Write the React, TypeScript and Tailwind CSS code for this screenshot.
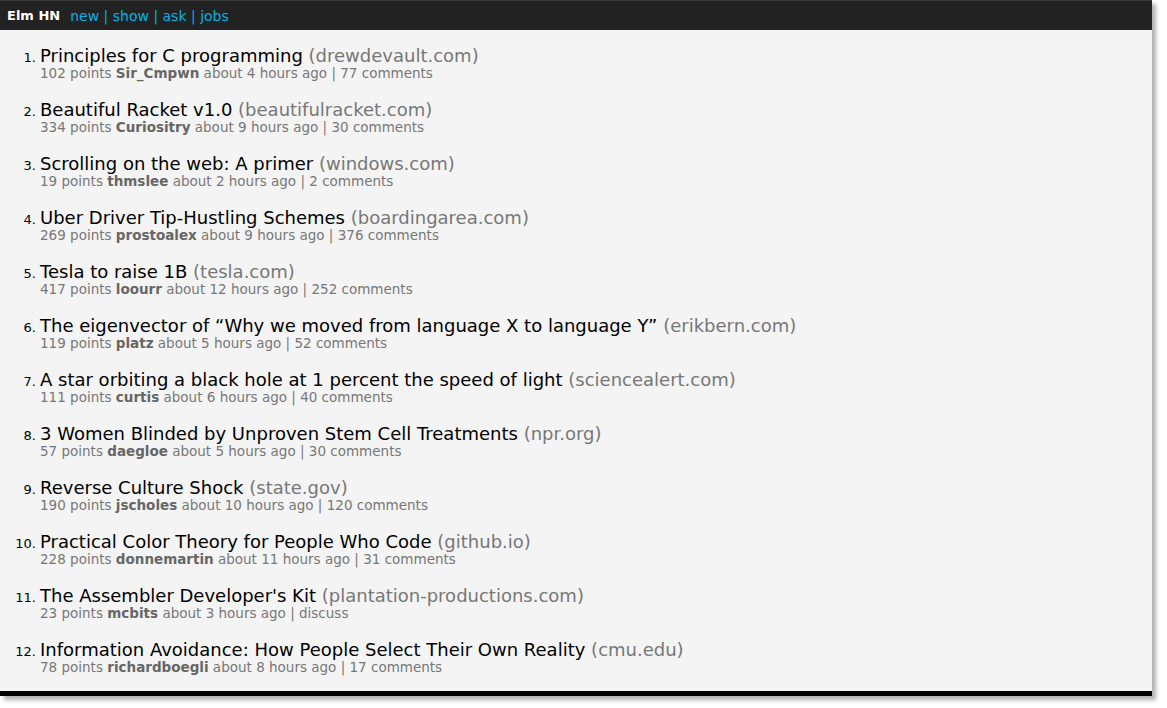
const stories = [
  { title: 'Principles for C programming', domain: 'drewdevault.com', points: 102, user: 'Sir_Cmpwn', time: '4 hours', comments: '77 comments' },
  { title: 'Beautiful Racket v1.0', domain: 'beautifulracket.com', points: 334, user: 'Curiositry', time: '9 hours', comments: '30 comments' },
  { title: 'Scrolling on the web: A primer', domain: 'windows.com', points: 19, user: 'thmslee', time: '2 hours', comments: '2 comments' },
  { title: 'Uber Driver Tip-Hustling Schemes', domain: 'boardingarea.com', points: 269, user: 'prostoalex', time: '9 hours', comments: '376 comments' },
  { title: 'Tesla to raise 1B', domain: 'tesla.com', points: 417, user: 'loourr', time: '12 hours', comments: '252 comments' },
  { title: 'The eigenvector of \u201cWhy we moved from language X to language Y\u201d', domain: 'erikbern.com', points: 119, user: 'platz', time: '5 hours', comments: '52 comments' },
  { title: 'A star orbiting a black hole at 1 percent the speed of light', domain: 'sciencealert.com', points: 111, user: 'curtis', time: '6 hours', comments: '40 comments' },
  { title: '3 Women Blinded by Unproven Stem Cell Treatments', domain: 'npr.org', points: 57, user: 'daegloe', time: '5 hours', comments: '30 comments' },
  { title: 'Reverse Culture Shock', domain: 'state.gov', points: 190, user: 'jscholes', time: '10 hours', comments: '120 comments' },
  { title: 'Practical Color Theory for People Who Code', domain: 'github.io', points: 228, user: 'donnemartin', time: '11 hours', comments: '31 comments' },
  { title: "The Assembler Developer's Kit", domain: 'plantation-productions.com', points: 23, user: 'mcbits', time: '3 hours', comments: 'discuss' },
  { title: 'Information Avoidance: How People Select Their Own Reality', domain: 'cmu.edu', points: 78, user: 'richardboegli', time: '8 hours', comments: '17 comments' },
];

export default function App() {
  return (
    <div className="w-[1167px] h-[708px] bg-white overflow-hidden" style={{ fontFamily: '"DejaVu Sans", Verdana, sans-serif' }}>
      <div className="w-[1152px] h-[696px] flex flex-col bg-[#f4f4f4] border-b-[5px] border-black shadow-[4px_4px_4px_rgba(0,0,0,0.3)]">
        <header className="h-[30px] shrink-0 bg-[#222] border-t border-[#3a3a3a] flex items-center pt-[1px] px-[7px] gap-[10px]">
          <span className="text-white font-bold text-[13px]">Elm HN</span>
          <nav className="text-[14px] text-[#00b3e6]">
            new <span>|</span> show <span>|</span> ask <span>|</span> jobs
          </nav>
        </header>
        <ol className="flex-1 pt-[16px]">
          {stories.map((s, i) => (
            <li key={i} className="flex items-baseline h-[54px]">
              <span className="w-[40px] shrink-0 text-right pr-[4px] text-[13px] text-black">{i + 1}.</span>
              <div className="flex flex-col">
                <div className="text-[18px] leading-[19px] text-black">
                  {s.title} <span className="text-[#777]">({s.domain})</span>
                </div>
                <div className="text-[13.5px] leading-[16px] text-[#777]">
                  {s.points} points <b className="text-[#666]">{s.user}</b> about {s.time} ago | {s.comments}
                </div>
              </div>
            </li>
          ))}
        </ol>
      </div>
    </div>
  );
}
